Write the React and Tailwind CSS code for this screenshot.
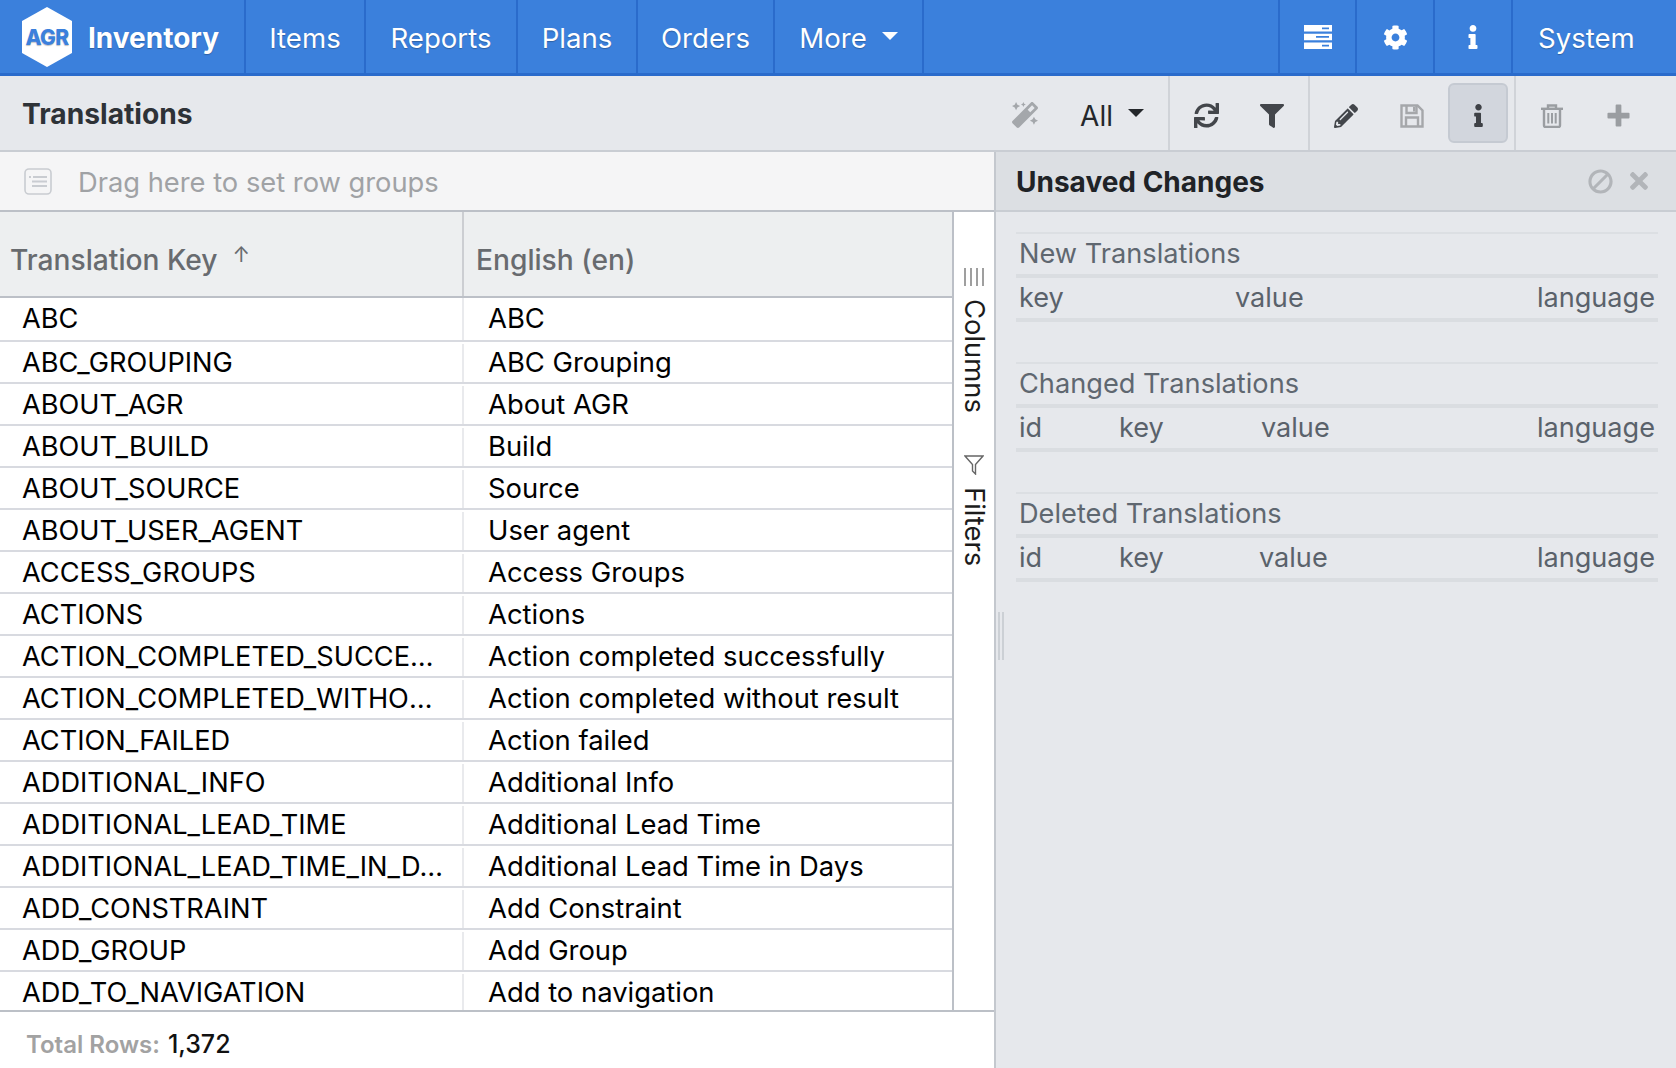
import React from 'react';
import { FaBan, FaCog, FaFilter, FaInfo, FaMagic, FaPencilAlt, FaSync, FaTimes } from 'react-icons/fa';

const FONT = "font-['Inter','Noto_Sans',sans-serif]";

const ROWS = [
  ['ABC', 'ABC'],
  ['ABC_GROUPING', 'ABC Grouping'],
  ['ABOUT_AGR', 'About AGR'],
  ['ABOUT_BUILD', 'Build'],
  ['ABOUT_SOURCE', 'Source'],
  ['ABOUT_USER_AGENT', 'User agent'],
  ['ACCESS_GROUPS', 'Access Groups'],
  ['ACTIONS', 'Actions'],
  ['ACTION_COMPLETED_SUCCESSFULLY', 'Action completed successfully'],
  ['ACTION_COMPLETED_WITHOUT_RESULT', 'Action completed without result'],
  ['ACTION_FAILED', 'Action failed'],
  ['ADDITIONAL_INFO', 'Additional Info'],
  ['ADDITIONAL_LEAD_TIME', 'Additional Lead Time'],
  ['ADDITIONAL_LEAD_TIME_IN_DAYS', 'Additional Lead Time in Days'],
  ['ADD_CONSTRAINT', 'Add Constraint'],
  ['ADD_GROUP', 'Add Group'],
  ['ADD_TO_NAVIGATION', 'Add to navigation'],
];

function NavItem({ className, children }) {
  return (
    <div className={`flex h-full items-center justify-center border-r-2 border-[#2a6bcb] ${className}`}>
      {children}
    </div>
  );
}

function Logo() {
  return (
    <svg width="50" height="60" viewBox="0 0 50 60" className="shrink-0">
      <polygon points="25,0 50,14 50,46 25,60 0,46 0,14" fill="#fff" />
      <text x="25" y="38" textAnchor="middle" fontFamily="Inter, sans-serif" fontWeight="800" fontSize="21" letterSpacing="-0.7" fill="#3b80dc">AGR</text>
    </svg>
  );
}

function ServerIcon() {
  return (
    <svg width="28" height="24" viewBox="0 0 28 24">
      <path fill="#fff" fillRule="evenodd" d="M0 0h28v6.500H0zM18 2.400v1.800h7V2.400zM0 8.700h28v6.500H0zM12 11v1.800h13V11zM0 17.500h28V24H0zM18 19.800v1.800h7v-1.800z" />
    </svg>
  );
}

function SaveIcon() {
  return (
    <svg width="24" height="24" viewBox="0 0 24 24" fill="none" stroke="#a5a7aa" strokeWidth="2.4">
      <path d="M1.500 1.500h16l5 5v16h-21z" />
      <path d="M6 22v-8.500h12V22" />
      <path d="M6.500 1.500v7.500h10V1.500" />
      <path d="M13 3v4.500h2.400V3z" fill="#a5a7aa" stroke="none" />
    </svg>
  );
}

function TrashIcon() {
  return (
    <svg width="22" height="24" viewBox="0 0 22 24" fill="none" stroke="#9a9da1" strokeWidth="2.400">
      <path d="M7 4.500V1.500h8v3" />
      <path d="M0 4.800h22" />
      <path d="M3 5v16.500a1.500 1.500 0 0 0 1.500 1.500h13a1.500 1.500 0 0 0 1.500-1.500V5" />
      <path d="M7.300 9v10.500M11 9v10.500M14.700 9v10.500" strokeWidth="2" />
    </svg>
  );
}

function PlusIcon() {
  return (
    <svg width="23" height="23" viewBox="0 0 24 24" fill="#9a9da1">
      <path d="M9 1.500a1 1 0 0 1 1-1h4a1 1 0 0 1 1 1V9h7.500a1 1 0 0 1 1 1v4a1 1 0 0 1-1 1H15v7.500a1 1 0 0 1-1 1h-4a1 1 0 0 1-1-1V15H1.500a1 1 0 0 1-1-1v-4a1 1 0 0 1 1-1H9z" />
    </svg>
  );
}

function ToolButton({ children, active }) {
  return (
    <div className={`flex h-[60px] items-center justify-center rounded-md pt-[5px] ${active ? 'mx-[3px] w-[60px] border-2 border-[#c5cad2] bg-[#d2d6dd]' : 'w-[66px]'}`}>
      {children}
    </div>
  );
}

function Divider() {
  return <div className="h-full w-[2px] bg-[#d0d3d8]" />;
}

function Section({ title, columns }) {
  return (
    <div className="mb-[40px] border-t-2 border-[#dcdfe3]">
      <div className="flex h-[40px] items-center pl-[3px] text-[27.2px] text-[#5f6770]">{title}</div>
      <div className="relative h-[48px] border-y-4 border-[#dadde1] text-[27.1px] text-[#5a626b]">
        {columns.map(([label, cls]) => (
          <span key={label} className={`absolute top-0 flex h-full items-center ${cls}`}>{label}</span>
        ))}
      </div>
    </div>
  );
}

export default function App() {
  return (
    <div className={`flex h-[1068px] w-[1676px] flex-col overflow-hidden bg-white ${FONT}`}>
      <header className="flex h-[76px] shrink-0 items-stretch border-b-[3px] border-[#2a6bcb] bg-[#3b80dc] text-[27.6px] text-white [text-shadow:0_1px_1px_rgba(0,0,0,0.25)]">
        <NavItem className="w-[246px] justify-start pl-[22px]">
          <Logo />
          <span className="ml-[16px] pt-[3px] text-[28px] font-bold">Inventory</span>
        </NavItem>
        <NavItem className="w-[120px] pt-[4px]">Items</NavItem>
        <NavItem className="w-[152px] pt-[4px]">Reports</NavItem>
        <NavItem className="w-[120px] pt-[4px]">Plans</NavItem>
        <NavItem className="w-[137px] pt-[4px]">Orders</NavItem>
        <NavItem className="w-[149px] pt-[4px]">
          More
          <span className="ml-[15px] mb-[6px] h-0 w-0 border-x-[8px] border-t-[8px] border-x-transparent border-t-white" />
        </NavItem>
        <div className="flex-1" />
        <div className="flex h-full w-[2px] bg-[#2a6bcb]" />
        <NavItem className="w-[77px]"><ServerIcon /></NavItem>
        <NavItem className="w-[78px]"><FaCog size={25} className="mt-[1px]" /></NavItem>
        <NavItem className="w-[78px]"><FaInfo size={24} /></NavItem>
        <div className="flex w-[163px] items-center pl-[25px] pt-[4px]">System</div>
      </header>

      <div className="flex h-[76px] shrink-0 items-center border-b-2 border-[#c9cdd3] bg-[#e6e8ec] pr-[22px]">
        <h1 className="pl-[22px] pt-[3px] text-[28.2px] font-bold text-[#2e3237]">Translations</h1>
        <div className="flex-1" />
        <div className="flex h-full items-center">
          <FaMagic size={26} className="mr-[42px] mt-[4px] text-[#a4a7ab]" />
          <span className="pt-[5px] text-[28px] text-[#24272b]">All</span>
          <span className="ml-[15px] mr-[24px] h-0 w-0 border-x-[8px] border-t-[8px] border-x-transparent border-t-[#24272b]" />
          <Divider />
          <div className="flex h-full items-center px-[3px]">
            <ToolButton><FaSync size={25} className="text-[#43464b]" /></ToolButton>
            <ToolButton><FaFilter size={24} className="text-[#43464b]" /></ToolButton>
          </div>
          <Divider />
          <div className="flex h-full items-center px-[3px]">
            <ToolButton><FaPencilAlt size={24} className="text-[#43464b]" /></ToolButton>
            <ToolButton><SaveIcon /></ToolButton>
            <ToolButton active><FaInfo size={23} className="text-[#3e4146]" /></ToolButton>
          </div>
          <Divider />
          <div className="flex h-full items-center px-[3px]">
            <ToolButton><TrashIcon /></ToolButton>
            <ToolButton><PlusIcon /></ToolButton>
          </div>
        </div>
      </div>

      <div className="flex min-h-0 flex-1">
        <div className="flex w-[994px] shrink-0 flex-col">
          <div className="flex h-[60px] shrink-0 items-center border-b-2 border-[#bcc0c7] bg-[#f5f5f6] pl-[24px]">
            <svg width="28" height="27" viewBox="0 0 28 27" fill="none" stroke="#c9ccd1" className="shrink-0">
              <rect x="1" y="1" width="26" height="25" rx="4" strokeWidth="1.6" />
              <path d="M5 9h2M9 9h14M8 13.500h15M8 18h15" strokeWidth="1.8" />
            </svg>
            <span className="ml-[26px] pt-[5px] text-[27.3px] text-[#a0a2a5]">Drag here to set row groups</span>
          </div>
          <div className="flex h-[800px] shrink-0 border-b-2 border-[#bcc0c7]">
            <div className="w-[952px] shrink-0">
              <div className="flex h-[86px] items-center border-b-2 border-[#bcc0c7] bg-[#edeff0] text-[28.2px] font-medium text-[#686b6f]">
                <div className="relative flex h-full w-[464px] items-center border-r-2 border-[#ccced2] pl-[10px] pt-[12px]">
                  Translation Key
                  <span className="ml-[15px] mb-[11px] text-[21px] font-normal leading-none text-[#686b6f]">↑</span>
                </div>
                <div className="pl-[12px] pt-[12px]">English (en)</div>
              </div>
              <div className="h-[712px] overflow-hidden">
                {ROWS.map(([key, text], i) => (
                  <div key={key} className={`flex border-b-2 border-[#d8dae0] text-[27.4px] text-black ${i === 0 ? 'h-[44px]' : 'h-[42px] pt-[2px]'}`}>
                    <div className="flex w-[464px] shrink-0 items-center border-r-2 border-[#e9eaed] pl-[22px] pr-[15px] text-[27.2px]">
                      <span className="truncate">{key}</span>
                    </div>
                    <div className="flex items-center pl-[24px]">{text}</div>
                  </div>
                ))}
              </div>
            </div>
            <div className="flex w-[42px] shrink-0 flex-col items-center border-l-2 border-[#bcc0c7] pt-[56px] text-[27.4px] text-[#1b1b1b]">
              <svg width="20" height="18" viewBox="0 0 20 18" stroke="#777" strokeWidth="1.4">
                <path d="M1 0v18M7 0v18M13 0v18M19 0v18" />
              </svg>
              <span className="mt-[13px] leading-none [writing-mode:vertical-rl]">Columns</span>
              <svg width="20" height="20" viewBox="0 0 20 20" fill="none" stroke="#666" strokeWidth="1.4" className="mt-[42px]">
                <path d="M1 1h18l-7.500 8.500V19l-3-3V9.500z" />
              </svg>
              <span className="mt-[12px] leading-none [writing-mode:vertical-rl]">Filters</span>
            </div>
          </div>
          <div className="flex h-[56px] shrink-0 items-center pl-[26px] pt-[10px] text-[24px]">
            <span className="font-semibold text-[#a2a2a2]">Total Rows:</span>
            <span className="ml-[8px] text-[25px] font-medium text-[#111]">1,372</span>
          </div>
        </div>

        <aside className="relative flex-1 border-l-2 border-[#c4c8ce] bg-[#e6e8ec]">
          <div className="flex h-[60px] items-center justify-between border-b-2 border-[#c9cdd3] bg-[#dcdfe3] pl-[20px] pr-[24px]">
            <h2 className="pt-[2px] text-[28px] font-bold text-[#202327]">Unsaved Changes</h2>
            <div className="flex items-center gap-[13px] text-[#b2b5b9]">
              <FaBan size={25} className="-scale-x-100" />
              <FaTimes size={26} />
            </div>
          </div>
          <div className="pl-[20px] pr-[18px] pt-[20px]">
            <Section title="New Translations" columns={[['key', 'left-[3px]'], ['value', 'left-[219px]'], ['language', 'right-[3px]']]} />
            <Section title="Changed Translations" columns={[['id', 'left-[3px]'], ['key', 'left-[103px]'], ['value', 'left-[245px]'], ['language', 'right-[3px]']]} />
            <Section title="Deleted Translations" columns={[['id', 'left-[3px]'], ['key', 'left-[103px]'], ['value', 'left-[243px]'], ['language', 'right-[3px]']]} />
          </div>
          <div className="absolute left-[2px] top-[460px] h-[48px] w-[6px] border-x-2 border-[#ccd0d5]" />
        </aside>
      </div>
    </div>
  );
}
